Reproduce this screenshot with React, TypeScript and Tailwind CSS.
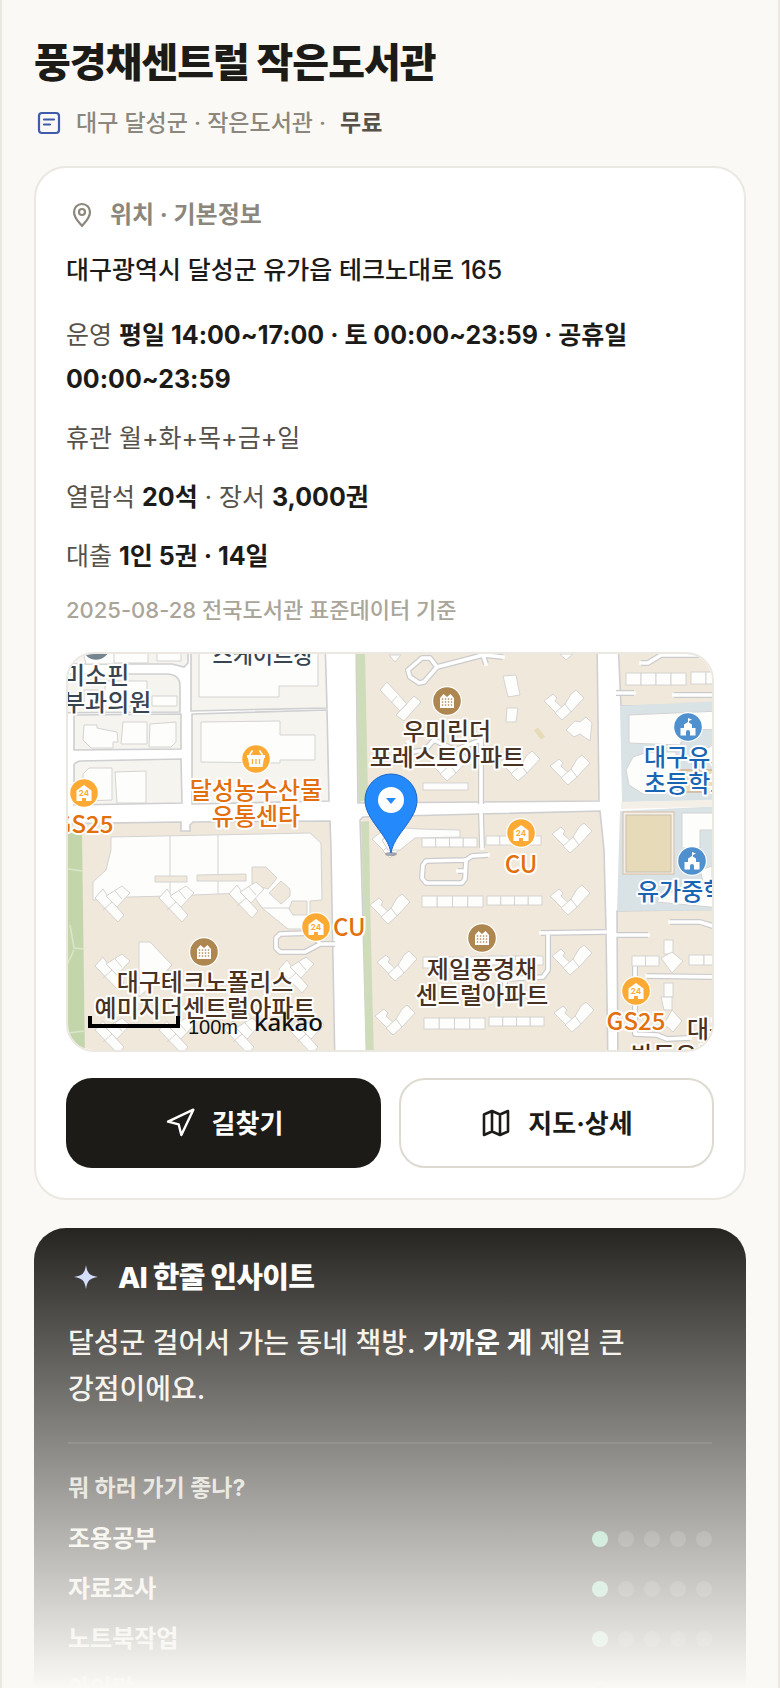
import type { ReactNode } from "react";
import { Navigation } from "lucide-react";

const towers: [number, number][] = [
  [388, 924], [568, 915], [395, 981], [570, 975], [393, 1035], [572, 1032],
  [562, 720], [568, 785], [570, 853], [447, 781], [518, 781], [390, 858],
];

const branches: [number, number][] = [
  [118, 922], [182, 922], [252, 918], [118, 990], [302, 993],
  [118, 1054], [182, 1054], [248, 1054], [312, 1054],
];

// x, y, width, height, units
const slabs: [number, number, number, number, number][] = [
  [422, 896, 61, 11, 4], [487, 896, 55, 9, 4], [424, 1018, 61, 11, 4], [489, 1017, 55, 9, 4],
  [423, 957, 61, 11, 4], [488, 956, 55, 9, 4], [422, 838, 55, 9, 4], [486, 836, 55, 9, 4],
  [423, 783, 45, 7, 1], [626, 673, 60, 12, 4], [691, 672, 30, 12, 2],
  [632, 956, 27, 10, 2], [689, 955, 30, 10, 2], [664, 940, 9, 14, 1], [664, 983, 9, 14, 1],
];

const lanes = [
  "M422 658 L430 658 L437 667 L424 682 L419 683 L410 677 L408 670 Z",
  "M437 667 L483 655 L503 657 M483 655 L486 664",
  "M481 738 L481 804 M481 813 L482 848 M408 742 L412 752 L425 750 L434 740 L455 750 L481 740",
  "M488 855 L472 856 L466 860 L426 861 L423 865 L422 878 L426 883 L462 883 L465 879 L466 860 M458 871 L465 871",
  "M541 933 L605 932 M617 935 L648 935 M548 933 L548 970 L543 977 L505 979 L505 986",
  "M670 922 L700 922 L716 927 M647 976 L720 977 M635 966 L635 1034 L657 1035 L667 1039 L690 1038",
  "M616 693 L634 693 M674 695 L720 695 M641 663 L648 663 L661 655 L720 655",
  "M335 944 L320 944 L312 933 L280 934 L276 938 L276 948 L280 952 L305 952 L320 944",
];

const lowerLeftBuildings = [
  "M111 837 L310 833 L321 843 L322 900 L310 901 L310 929 L288 929 L262 908 L252 893 L218 894 L170 896 L128 897 L93 900 L93 882 L106 870 L111 850 Z",
  "M139 942 L150 942 L172 965 L158 980 L139 997 Z",
];

const upperLeftBuildings = [
  "M80 640 H122 V664 H86 Z", "M114 640 H148 V663 H114 Z", "M157 640 H181 V661 H157 Z",
  "M105 681 H147 V706 H84 V690 H105 Z", "M152 696 H177 V706 H152 Z",
  "M84 725 H97 V728 L117 732 L118 742 H113 V748 H91 L83 740 Z", "M123 722 H147 V744 H121 Z",
  "M150 724 L176 722 V742 L171 747 H149 Z", "M89 768 H112 V800 L83 801 V774 Z",
  "M115 772 L146 771 V803 H117 Z", "M199 640 H318 V686 H279 V697 H199 Z",
  "M201 722 L280 721 V735 H315 V760 H280 V763 L201 762 Z",
];

function Label({ x, y, fill, anchor = "middle", size = 24, children }: {
  x: number;
  y: number;
  fill: string;
  anchor?: "start" | "middle";
  size?: number;
  children: ReactNode;
}) {
  return (
    <text x={x} y={y} fill={fill} textAnchor={anchor} fontSize={size} fontWeight={500} stroke="#fff" strokeWidth={4} strokeLinejoin="round" paintOrder="stroke">
      {children}
    </text>
  );
}

function Poi({ x, y, kind }: { x: number; y: number; kind: "apt" | "store" | "market" | "school" | "clinic" }) {
  const fill = { apt: "#ad8650", store: "#fcaa34", market: "#fcaa34", school: "#4f91ce", clinic: "#74858f" }[kind];
  return (
    <g transform={`translate(${x} ${y})`}>
      <circle r="15" fill="#fff" />
      <circle r="13.8" fill={fill} />
      {kind === "apt" && (
        <>
          <path d="M-7 7 V-3 L-3.5 -7 L0 -4 L3.5 -7 L7 -3 V7 Z" fill="#fff" />
          {[-4.5, -1.5, 1.5, 4.5].map((cx) =>
            [-2, 1, 4].map((cy) => <rect key={`${cx}${cy}`} x={cx - 0.7} y={cy - 0.7} width="1.4" height="1.4" fill={fill} />)
          )}
        </>
      )}
      {kind === "store" && (
        <>
          <path d="M-7.5 8 V-2.5 L0 -8 L7.5 -2.5 V8 H2 V5 H-2 V8 Z" fill="#fff" />
          <text y="3" textAnchor="middle" fontSize="8" fontWeight={700} fill={fill} fontFamily="Inter, sans-serif">24</text>
        </>
      )}
      {kind === "market" && (
        <>
          <path d="M-9 -4 H9 V-1 H8 L6.5 8 H-6.5 L-8 -1 H-9 Z" fill="#fff" />
          <path d="M-6.5 -4 L-3.5 -8.5 M6.5 -4 L3.5 -8.5" stroke="#fff" strokeWidth="1.6" />
          <path d="M-3.5 0 V5 M0 0 V5 M3.5 0 V5" stroke={fill} strokeWidth="1.3" />
        </>
      )}
      {kind === "school" && (
        <>
          <path d="M-7.5 8.5 V1 H-4 V-2.5 L0 -5 L4 -2.5 V1 H7.5 V8.5 H2 V5 A2 2 0 0 0 -2 5 V8.5 Z" fill="#fff" />
          <path d="M0 -4 V-9 L4 -7.5 L1 -6 V-4 Z" fill="#fff" />
        </>
      )}
    </g>
  );
}

function LocationMap() {
  return (
    <svg
      viewBox="68 654 644 396"
      preserveAspectRatio="xMidYMid slice"
      className="block h-[396px] w-full font-['Noto_Sans_CJK_KR',sans-serif]"
      role="img"
      aria-label="풍경채센트럴 작은도서관 위치"
    >
      <rect x="0" y="600" width="800" height="500" fill="#fff" />

      {/* blocks */}
      <g fill="#f5f4ef" stroke="#cfcfd1" strokeWidth="1.6">
        <path d="M40 640 H188 V663 L184 667 L172 664 H40 Z" />
        <path d="M40 674 H168 Q180 675 180 686 V712 L40 713 Z" />
        <path d="M74 715 L181 714 V749 L74 750 Z" />
        <path d="M74 765 Q75 762 80 761 L181 759 L182 803 L74 805 Z" />
        <path d="M191 640 H325 L327 708 L191 711 Z" />
        <path d="M192 714 L327 710 L329 801 L192 804 Z" />
      </g>
      <g fill="#f0e8da" stroke="#cfcfd1" strokeWidth="1.6">
        <path d="M40 824 L181 822 V831 H190 V825 L193 822 L330 821 L331 850 L335 1070 H40 Z" />
        <path d="M356 640 H597 L599 801 L358 803 Z" />
        <path d="M360 820 L363 817 L600 811 L604 850 L606 930 L608 1070 H367 L361 850 Z" />
        <path d="M618 640 H740 V704 L621 706 Z" />
        <path d="M617 911 L740 909 V1070 H618 Z" />
      </g>
      <path d="M356 650 H365 L368 799 L359 802 Z" fill="#cfdcba" />
      <path d="M361 822 L369 821 L370 900 L374 1060 H366 L362 850 Z" fill="#cfdcba" />
      <path d="M60 833 H82 L85 1060 H60 Z" fill="#c3d6ab" />
      <path d="M68 869 L83 871 M70 925 L74 948 L84 949 M74 950 L67 965 M68 1033 L84 1031" stroke="#dbe5cc" strokeWidth="1.6" fill="none" />
      <path d="M620 706 L740 700 V800 L622 802 Z M620 811 L740 805 V910 L617 911 Z" fill="#d9e2e5" />
      <path d="M621 802 L740 799 V806 L621 809 Z" fill="#f4f0e8" />

      {/* lanes: casing first, then the surface */}
      {lanes.map((d) => <path key={`c${d}`} d={d} fill="none" stroke="#cbcbce" strokeWidth="6" strokeLinejoin="round" />)}
      {lanes.map((d) => <path key={`s${d}`} d={d} fill="none" stroke="#fff" strokeWidth="3.6" strokeLinejoin="round" strokeLinecap="square" />)}

      {/* buildings */}
      <g fill="#fdfdfc" stroke="#d4d3d2" strokeWidth="1">
        {upperLeftBuildings.map((d) => <path key={d} d={d} />)}
        {lowerLeftBuildings.map((d) => <path key={d} d={d} />)}
        <path d="M170 836 V896 M218 835 V894 M262 908 H290" fill="none" />
        <g fill="#f0e8da">
          <path d="M155 876 H187 V882 H155 Z M197 875 L246 874 V881 H197 Z" />
          <path d="M252 867 H266 L277 878 L268 889 L252 884 Z M281 881 L290 889 V896 L281 904 L269 893 Z M292 901 H307 V915 H293 L289 909 Z" />
        </g>
        {slabs.map(([x, y, w, h, n]) => (
          <g key={`${x}-${y}`}>
            {Array.from({ length: n }, (_, i) => <rect key={i} x={x + (w / n) * i} y={y} width={w / n} height={h} />)}
          </g>
        ))}
        {towers.map(([x, y]) => (
          <g key={`${x}-${y}`} transform={`translate(${x} ${y})`}>
            <path d="M-4 -5 L-18 -19 L-9 -26 L-5 -22 L-7 -19 L3 -10 Z" />
            <path d="M0 0 L-7 -7 L3 -16 L9 -26 L14 -30 L22 -22 L9 -8 Z M3 -16 L9 -8" />
          </g>
        ))}
        {branches.map(([x, y]) => (
          <g key={`${x}-${y}`} transform={`translate(${x} ${y})`}>
            <path d="M-15 -33 L-23 -24 L0 0 L6 -7 L-6 -20 Z M-6 -20 L-15 -12" />
            <path d="M-6 -20 L-12 -26 L4 -36 L12 -29 L-1 -15 Z M-3 -31 L4 -23" />
          </g>
        ))}
        <path d="M380 690 L387 682 L407 704 L400 711 Z M391 703 L397 696 M414 696 L421 702 L404 721 L396 715 Z" />
        <path d="M389 655 L401 655 L395 662 Z M503 676 L516 675 L520 695 L508 697 Z M507 708 H518 L516 722 H506 Z" />
        <path d="M566 730 L575 721 L580 722 L586 717 L592 723 L590 741 L580 734 L574 737 Z M560 654 H573 L566 660 Z" />
        <path d="M382 840 L405 828 L420 829 L460 830 V837 L415 838 L400 850 L388 850 Z" />
        <path d="M661 958 L672 952 L683 961 L672 973 Z M661 997 H672 V1010 H664 Z M672 1010 L682 1021 L673 1032 L664 1024 Z" />
        <path d="M629 715 L720 711 V730 L686 729 L680 745 L629 743 Z" />
        <path d="M633 757 L648 752 L676 752 V793 L643 794 L629 785 L626 770 Z M692 752 L720 744 V760 L692 765 Z" />
        <path d="M682 813 H720 V830 H700 V848 H682 Z M657 902 L662 893 L720 888 V908 Z M700 870 L712 866 V885 L704 885 Z" />
      </g>
      <path d="M678 770 H720 V792 H678 Z" fill="#e8dcc0" stroke="#c99f7e" />
      <path d="M684 775 H716 M684 781 H716 M690 787 H716" stroke="#fff" strokeWidth="2" />
      <rect x="623" y="812" width="51" height="62" fill="#f5efe6" stroke="#d8bca6" />
      <rect x="626" y="815" width="45" height="57" fill="#e6dab8" stroke="#c9c0ae" />
      <path d="M536 729 L543 738" stroke="#e6dab8" strokeWidth="5" />

      {/* places */}
      <Poi x={96} y={646} kind="clinic" />
      <Poi x={447} y={701} kind="apt" />
      <Poi x={482} y={938} kind="apt" />
      <Poi x={204} y={952} kind="apt" />
      <Poi x={256} y={759} kind="market" />
      <Poi x={84} y={793} kind="store" />
      <Poi x={521} y={833} kind="store" />
      <Poi x={316} y={927} kind="store" />
      <Poi x={636} y={991} kind="store" />
      <Poi x={688} y={727} kind="school" />
      <Poi x={692} y={861} kind="school" />

      <Label x={63} y={684} fill="#38444f" anchor="start">미소핀</Label>
      <Label x={63} y={711} fill="#38444f" anchor="start">부과의원</Label>
      <Label x={263} y={663} fill="#38444f" size={22}>스케이트장</Label>
      <Label x={447} y={740} fill="#4a3223">우미린더</Label>
      <Label x={447} y={766} fill="#4a3223">포레스트아파트</Label>
      <Label x={256} y={799} fill="#e2700c">달성농수산물</Label>
      <Label x={256} y={825} fill="#e2700c">유통센타</Label>
      <Label x={84} y={833} fill="#e2700c">GS25</Label>
      <Label x={521} y={873} fill="#e2700c">CU</Label>
      <Label x={333} y={936} fill="#e2700c" anchor="start">CU</Label>
      <Label x={636} y={1030} fill="#e2700c">GS25</Label>
      <Label x={644} y={766} fill="#1a65b3" anchor="start">대구유가</Label>
      <Label x={644} y={792} fill="#1a65b3" anchor="start">초등학교</Label>
      <Label x={637} y={900} fill="#1a65b3" anchor="start">유가중학교</Label>
      <Label x={482} y={978} fill="#4a3223">제일풍경채</Label>
      <Label x={482} y={1004} fill="#4a3223">센트럴아파트</Label>
      <Label x={205} y={991} fill="#4a3223">대구테크노폴리스</Label>
      <Label x={205} y={1017} fill="#4a3223">예미지더센트럴아파트</Label>
      <Label x={687} y={1038} fill="#4a3223" anchor="start">대구</Label>
      <Label x={631} y={1064} fill="#4a3223" anchor="start">반도유보라</Label>

      {/* current library */}
      <ellipse cx="391" cy="854" rx="6" ry="2" fill="#6b7280" opacity=".6" />
      <path d="M391 853 C388 834 365 820 365 800 A26 26 0 0 1 417 800 C417 820 394 834 391 853 Z" fill="#2489fa" stroke="#1a66c9" />
      <circle cx="391" cy="800" r="13" fill="#fff" />
      <path d="M386 798 H396 L391 804 Z" fill="#2489fa" />

      {/* scale bar and provider */}
      <path d="M90 1016 V1026 H178 V1016" fill="none" stroke="#000" strokeWidth="4" />
      <text x="188" y="1034" fontSize="20" fill="#111" fontFamily="'Liberation Sans', sans-serif">100m</text>
      <text x="254" y="1031" fontSize="24" fontWeight={500} fill="#111" fontFamily="'Noto Sans', sans-serif">kakao</text>
    </svg>
  );
}

const activities = [
  { name: "조용공부", score: 1 },
  { name: "자료조사", score: 1 },
  { name: "노트북작업", score: 1 },
  { name: "아이랑", score: 1 },
];

function Score({ value }: { value: number }) {
  return (
    <span className="flex gap-[10px]" role="img" aria-label={`5점 중 ${value}점`}>
      {[1, 2, 3, 4, 5].map((n) => (
        <span key={n} className={n <= value ? "size-4 rounded-full bg-[#7fd1ae]" : "size-4 rounded-full bg-white/15"} />
      ))}
    </span>
  );
}

export default function App() {
  return (
    <main className="relative h-screen overflow-hidden border-x-2 border-[#ebe8e1] bg-[#faf9f5] px-8 pt-[37px] font-[Inter,'Noto_Sans_CJK_KR',sans-serif] break-keep text-[#1c1b18]">
      <h1 className="text-[40px] leading-[52px] font-extrabold tracking-tight">풍경채센트럴 작은도서관</h1>
      <p className="mt-[18px] flex items-center text-[23px] leading-8 font-medium text-[#8c877c]">
        <svg viewBox="0 0 30 30" className="mr-3 size-[30px]" fill="none" stroke="#3f5ba9" strokeWidth="2.2" strokeLinecap="round" aria-hidden="true">
          <rect x="5" y="5" width="20" height="20" rx="3" />
          <path d="M10 11.5h10M10 16.5h6" />
        </svg>
        대구 달성군 · 작은도서관 ·
        <b className="ml-3.5 font-bold text-[#56524a]">무료</b>
      </p>

      <section className="mt-[27px] rounded-[32px] border-2 border-[#ebe8e1] bg-white p-[30px]">
        <h2 className="flex items-center gap-3 text-2xl leading-[34px] font-bold text-[#8c877c]">
          <svg viewBox="0 0 32 32" className="size-8" fill="none" stroke="currentColor" strokeWidth="2.2" strokeLinejoin="round" aria-hidden="true">
            <path d="M16 27c-1-2-8-7-8-14a8 8 0 0 1 16 0c0 7-7 12-8 14z" />
            <circle cx="16" cy="13" r="3" />
          </svg>
          위치 · 기본정보
        </h2>
        <p className="mt-[18px] text-[25px] leading-10 font-medium">대구광역시 달성군 유가읍 테크노대로 165</p>
        <div className="mt-[23px] flex flex-col gap-[15px] text-[25px] leading-[44px] text-[#56524a] [&_b]:font-bold [&_b]:text-[#1c1b18]">
          <p>운영 <b>평일 14:00~17:00 · 토 00:00~23:59 · 공휴일 00:00~23:59</b></p>
          <p>휴관 월+화+목+금+일</p>
          <p>열람석 <b>20석</b> · 장서 <b>3,000권</b></p>
          <p>대출 <b>1인 5권 · 14일</b></p>
        </div>
        <p className="mt-4 text-[22px] leading-8 font-medium text-[#aaa599]">2025-08-28 전국도서관 표준데이터 기준</p>

        <div className="mt-[26px] overflow-hidden rounded-[28px] border-2 border-[#ebe8e1]">
          <LocationMap />
        </div>

        <div className="mt-[26px] grid grid-cols-2 gap-[18px] text-[26px] font-bold">
          <button type="button" className="flex h-[90px] items-center justify-center gap-4 rounded-[26px] bg-[#1c1b18] text-white">
            <Navigation size={32} strokeWidth={1.8} />
            길찾기
          </button>
          <button type="button" className="flex h-[90px] items-center justify-center gap-4 rounded-[26px] border-2 border-[#dedad2] bg-white">
            <svg viewBox="0 0 32 32" className="size-8" fill="none" stroke="currentColor" strokeWidth="2.6" strokeLinejoin="round" aria-hidden="true">
              <path d="M4 7.5 12 4l8 3.5L28 4v20.500L20 28l-8-3.500L4 28zM12 4v20.500M20 7.500V28" />
            </svg>
            지도·상세
          </button>
        </div>
      </section>

      <section className="mt-7 rounded-[32px] bg-[#1c1b18] px-[34px] py-8 text-[#f3f0e8]">
        <h2 className="flex items-center gap-[14px] text-[29px] leading-9 font-extrabold tracking-tight text-white">
          <svg viewBox="0 0 36 36" className="size-9" fill="#cdd9fb" aria-hidden="true">
            <path d="M18 5c1.400 8.500 3.500 10.600 12 12-8.500 1.400-10.600 3.500-12 12-1.400-8.500-3.500-10.600-12-12 8.500-1.400 10.600-3.500 12-12z" />
          </svg>
          AI 한줄 인사이트
        </h2>
        <p className="mt-6 text-[28px] leading-[46px] font-medium">
          달성군 걸어서 가는 동네 책방. <b className="font-bold text-white">가까운 게</b> 제일 큰 강점이에요.
        </p>
        <div className="mt-[30px] border-t-2 border-white/10 pt-7">
          <h3 className="text-[23px] leading-8 font-bold text-[#d6d2c8]">뭐 하러 가기 좋나?</h3>
          <ul className="mt-2.5">
            {activities.map((a) => (
              <li key={a.name} className="flex h-[50px] items-center justify-between text-2xl font-semibold">
                {a.name}
                <Score value={a.score} />
              </li>
            ))}
          </ul>
        </div>
      </section>

      {/* fade over the locked part of the page */}
      <div className="pointer-events-none absolute inset-x-0 bottom-0 h-[480px] bg-linear-to-b from-[#faf9f5]/0 to-[#faf9f5]" />
    </main>
  );
}
